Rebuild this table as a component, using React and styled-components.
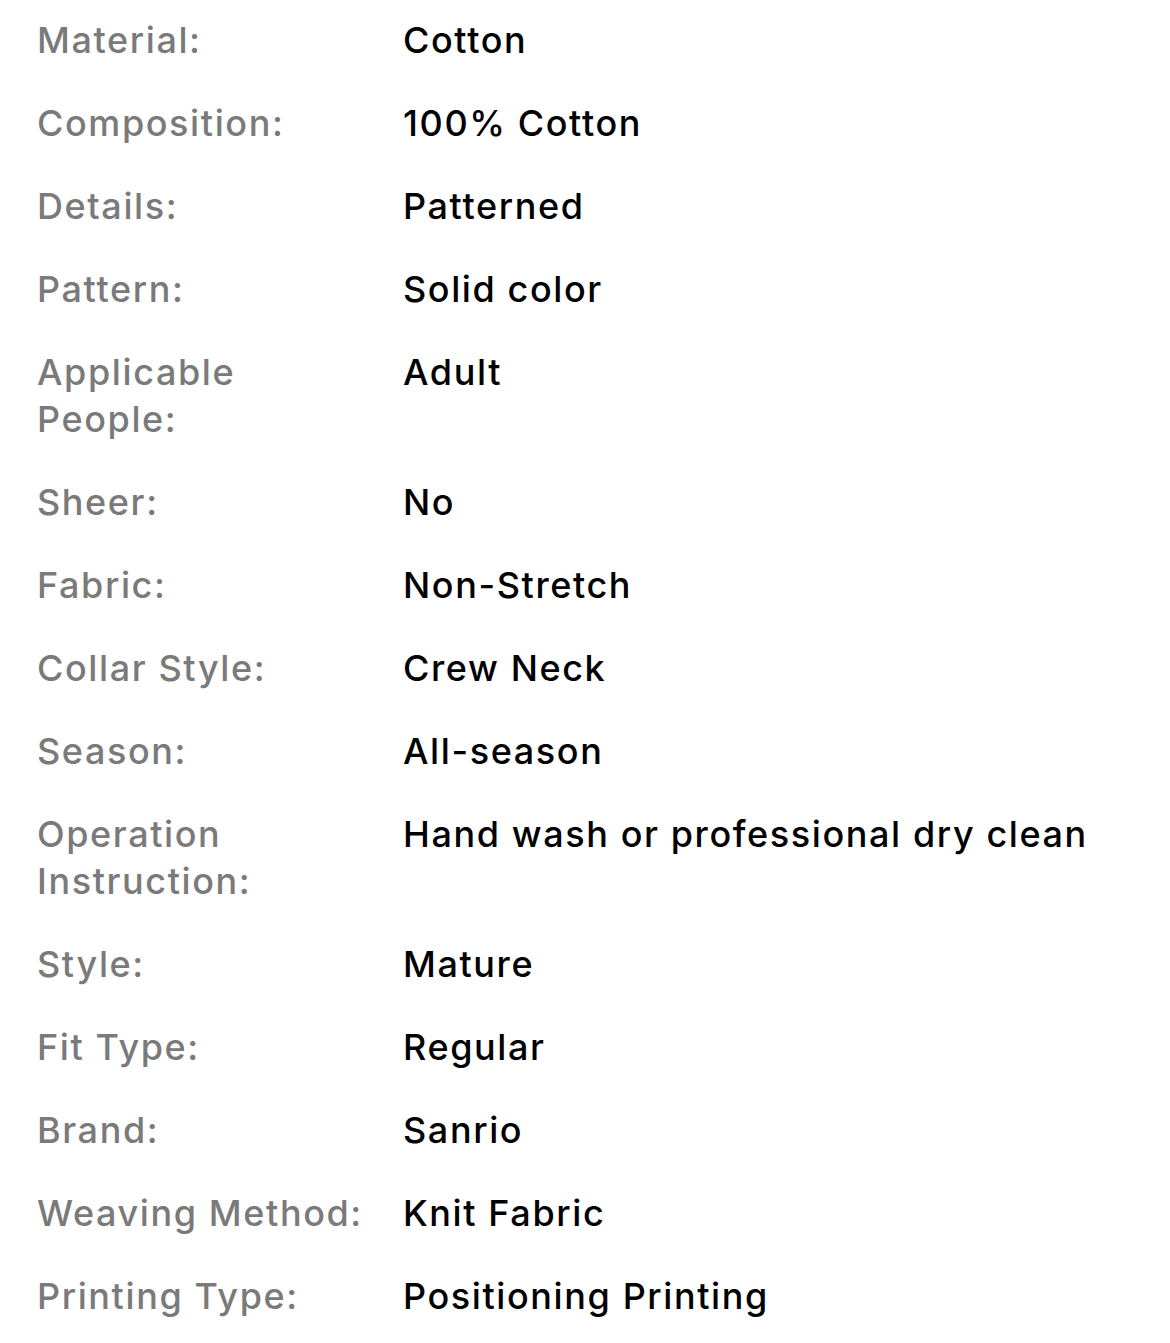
import React from 'react'
import styled, { createGlobalStyle } from 'styled-components'

const GlobalStyle = createGlobalStyle`
  body {
    margin: 0;
    background: #ffffff;
    font-family: Inter, "Noto Sans", sans-serif;
    -webkit-font-smoothing: antialiased;
  }
`

const Specs = styled.dl`
  display: grid;
  grid-template-columns: 366px 1fr;
  row-gap: 36px;
  margin: 0;
  padding: 17px 0 0 37px;
  font-size: 36px;
  line-height: 47px;
  font-weight: 500;
  letter-spacing: 1.6px;
`

const Label = styled.dt`
  margin: 0;
  color: #7a7a7a;
  padding-right: 30px;
`

const Value = styled.dd`
  margin: 0;
  color: #000000;
`

const specs = [
  ['Material:', 'Cotton'],
  ['Composition:', '100% Cotton'],
  ['Details:', 'Patterned'],
  ['Pattern:', 'Solid color'],
  ['Applicable People:', 'Adult'],
  ['Sheer:', 'No'],
  ['Fabric:', 'Non-Stretch'],
  ['Collar Style:', 'Crew Neck'],
  ['Season:', 'All-season'],
  ['Operation Instruction:', 'Hand wash or professional dry clean'],
  ['Style:', 'Mature'],
  ['Fit Type:', 'Regular'],
  ['Brand:', 'Sanrio'],
  ['Weaving Method:', 'Knit Fabric'],
  ['Printing Type:', 'Positioning Printing'],
]

export default function App() {
  return (
    <>
      <GlobalStyle />
      <Specs>
        {specs.map(([label, value]) => (
          <React.Fragment key={label}>
            <Label>{label}</Label>
            <Value>{value}</Value>
          </React.Fragment>
        ))}
      </Specs>
    </>
  )
}
